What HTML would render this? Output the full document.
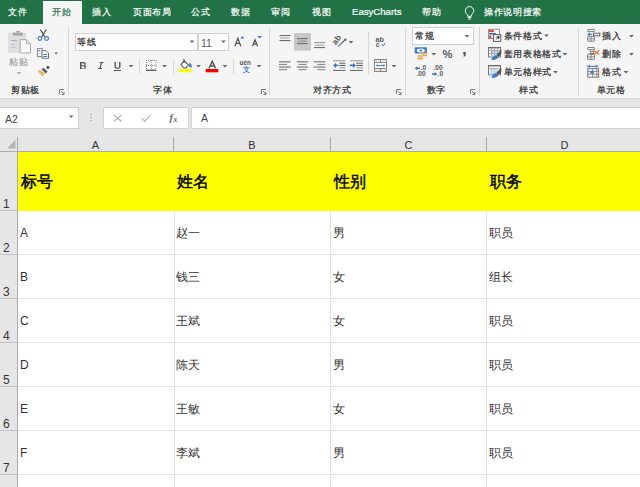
<!DOCTYPE html>
<html><head><meta charset="utf-8">
<style>
*{margin:0;padding:0;box-sizing:border-box}
html,body{width:640px;height:487px;overflow:hidden;background:#fff;font-family:"Liberation Sans",sans-serif}
div{position:absolute;white-space:nowrap}
.tab{top:6px;font-size:9px;letter-spacing:.7px;line-height:12px;color:#fff;-webkit-text-stroke:.2px}
.t{font-size:9px;letter-spacing:.7px;line-height:12px;color:#333;-webkit-text-stroke:.25px}
.ch{top:139px;font-size:11px;line-height:12px;color:#333;text-align:center}
.rn{left:3px;font-size:12px;line-height:12px;color:#333}
.ct{font-size:12px;line-height:14px;color:#333}
.hd{font-size:15.5px;line-height:18px;color:#000;-webkit-text-stroke:.45px #000;top:173px}
.gl{width:1px;background:#e1e1e1}
.gh{height:1px;background:#e1e1e1;left:18px;width:622px}
</style></head><body>
<!-- tab bar -->
<div style="left:0;top:0;width:640px;height:24px;background:#217346"></div>
<div style="left:43px;top:1px;width:39px;height:23px;background:#f5f5f5"></div>
<div class="tab" style="left:8px">文件</div>
<div class="tab" style="left:52px;color:#217346">开始</div>
<div class="tab" style="left:92px">插入</div>
<div class="tab" style="left:133px">页面布局</div>
<div class="tab" style="left:191px">公式</div>
<div class="tab" style="left:231px">数据</div>
<div class="tab" style="left:271px">审阅</div>
<div class="tab" style="left:312px">视图</div>
<div class="tab" style="left:352px;top:5px;font-size:9.6px;letter-spacing:0;line-height:14px">EasyCharts</div>
<div class="tab" style="left:422px">帮助</div>
<div class="tab" style="left:484px">操作说明搜索</div>

<!-- ribbon -->
<div style="left:0;top:24px;width:640px;height:74px;background:#f5f5f5"></div>
<div style="left:0;top:98px;width:640px;height:1px;background:#d4d4d4"></div>

<!-- ribbon separators & icons -->
<svg style="position:absolute;left:0;top:0" width="640" height="100" viewBox="0 0 640 100">
<g fill="#d6d6d6">
<rect x="68" y="27" width="1" height="68"/>
<rect x="269" y="27" width="1" height="68"/>
<rect x="405" y="27" width="1" height="68"/>
<rect x="479" y="27" width="1" height="68"/>
<rect x="578" y="27" width="1" height="68"/>
<rect x="139" y="59" width="1" height="15"/>
<rect x="173" y="59" width="1" height="15"/>
<rect x="233" y="59" width="1" height="15"/>
<rect x="368" y="32" width="1" height="43"/>
</g>
<!-- launchers -->
<g fill="none" stroke="#777" stroke-width="1">
<path d="M59.5 94V89.5H64"/><path d="M61 91L64 94M64 92V94.5H61.5"/>
<path d="M261.5 94V89.5H266"/><path d="M263 91L266 94M266 92V94.5H263.5"/>
<path d="M396.5 94V89.5H401"/><path d="M398 91L401 94M401 92V94.5H398.5"/>
<path d="M470.5 94V89.5H475"/><path d="M472 91L475 94M475 92V94.5H472.5"/>
</g>
<!-- font boxes -->
<rect x="75.5" y="33.5" width="122" height="17" fill="#fff" stroke="#d0d0d0"/>
<rect x="198.5" y="33.5" width="30" height="17" fill="#fff" stroke="#d0d0d0"/>
<!-- number format box -->
<rect x="412.5" y="27.5" width="61" height="17" fill="#fff" stroke="#d0d0d0"/>
<!-- dropdown arrows -->
<g fill="#666">
<path d="M16.6 72.0h4.8l-2.4 2.5z" fill="#a8a8a8"/>
<path d="M54.2 52.6h3.8l-1.9 2z"/>
<path d="M128.6 65.0h4.8l-2.4 2.5z"/>
<path d="M162.1 65.0h4.8l-2.4 2.5z"/>
<path d="M196.1 65.0h4.8l-2.4 2.5z"/>
<path d="M222.6 65.0h4.8l-2.4 2.5z"/>
<path d="M256.6 65.0h4.8l-2.4 2.5z"/>
<path d="M348.6 41.0h4.8l-2.4 2.5z"/>
<path d="M391.6 65.0h4.8l-2.4 2.5z"/>
<path d="M189.6 40.5h4.8l-2.4 2.5z"/>
<path d="M221.1 40.5h4.8l-2.4 2.5z"/>
<path d="M464.6 35.0h4.8l-2.4 2.5z"/>
<path d="M431.4 53.0h4.8l-2.4 2.5z"/>
<path d="M544.1 34.5h4.8l-2.4 2.5z"/>
<path d="M562.6 53.0h4.8l-2.4 2.5z"/>
<path d="M553.1 71.0h4.8l-2.4 2.5z"/>
<path d="M629.1 35.0h4.8l-2.4 2.5z"/>
<path d="M629.1 53.0h4.8l-2.4 2.5z"/>
<path d="M623.6 71.0h4.8l-2.4 2.5z"/>
</g>
<!-- paste (disabled) -->
<g>
<rect x="9" y="33.5" width="16" height="18.5" fill="#e6e6e6" stroke="#cdcdcd"/>
<rect x="10.5" y="36" width="13" height="14.5" fill="#dedede"/>
<rect x="12.8" y="32.5" width="10.2" height="3.2" fill="#a8a8a8"/>
<path d="M16.2 32.5v-1.6h3.6v1.6z" fill="#a8a8a8"/>
<rect x="11" y="40" width="6" height="1" fill="#b9a3cf"/>
<rect x="11" y="44" width="4" height="1" fill="#c8c0d8"/>
<rect x="11" y="47" width="5" height="1" fill="#c8c0d8"/>
<path d="M20.2 39.7h6.3l4 4v9.3h-10.3z" fill="#f9f9f9" stroke="#a9a9a9"/>
<path d="M26.5 39.7v4h4" fill="none" stroke="#a9a9a9"/>
</g>
<!-- scissors -->
<g fill="none">
<path d="M40.3 29.5L44.8 36.6M46.3 29.5L41.8 36.6" stroke="#555" stroke-width="1.3"/>
<circle cx="39.9" cy="38.5" r="1.9" stroke="#3a78c8" stroke-width="1.1"/>
<circle cx="46.6" cy="38.5" r="1.9" stroke="#3a78c8" stroke-width="1.1"/>
</g>
<!-- copy -->
<g>
<rect x="37.6" y="48.6" width="4.6" height="8" fill="#fff" stroke="#808080"/>
<rect x="38.8" y="50" width="1.4" height="1.2" fill="#3a78c8"/>
<rect x="38.8" y="52.4" width="2" height="1" fill="#a8c4ea"/>
<path d="M42 50.6h3.9l2.6 2.6v5.1h-6.5z" fill="#fff" stroke="#707070"/>
<rect x="43.2" y="54" width="4" height="1" fill="#3a78c8"/>
<rect x="43.2" y="56" width="4" height="1" fill="#3a78c8"/>
</g>
<!-- format painter -->
<g>
<path d="M37.5 71.1L40.3 70L45.1 73.5L42.3 76.6z" fill="#e8b866"/>
<path d="M41.6 69.6L43.4 67.8L47.6 71.6L45.8 73.4z" fill="#5a5a5a"/>
<circle cx="47.9" cy="67.4" r="1.6" fill="#5a5a5a"/>
</g>

<!-- grow/shrink font -->
<path d="M234.9 46.2L237.85 38.3L240.8 46.2M236 43.4h3.8M252.5 46.2L255 39.8L257.5 46.2M253.4 44.2h3.2" fill="none" stroke="#555" stroke-width="1.25"/>
<path d="M240.2 38.4L242.25 35.9L244.3 38.4z M257.4 35.9h4.6l-2.3 2.5z" fill="#3a78c8"/>

<!-- B I U -->
<g fill="#555">
<path d="M80 62h3.3c1.6 0 2.5 .8 2.5 1.8c0 .8-.5 1.3-1.1 1.5c.8 .2 1.4 .9 1.4 1.8c0 1.2-1 1.9-2.6 1.9H80zM81.5 63.2v2h1.6c.8 0 1.2-.4 1.2-1s-.4-1-1.2-1zM81.5 66.3v2.3h1.8c.9 0 1.3-.4 1.3-1.15s-.5-1.15-1.3-1.15z"/>
<path d="M99.5 62h4v1h-1.4l-1.4 5h1.3v1h-4v-1h1.4l1.4-5h-1.3z"/>
<path d="M114.5 62h1.4v4.2c0 1.1 .6 1.6 1.6 1.6s1.6-.5 1.6-1.6V62h1.4v4.2c0 1.8-1.1 2.8-3 2.8s-3-1-3-2.8z"/>
<rect x="114" y="70" width="7" height="1"/>
</g>
<!-- borders icon -->
<rect x="146" y="60" width="10.4" height="10" fill="#fff"/>
<path d="M146.5 60v10M151.5 60v10M155.9 60v10M146 60.5h10.4M146 65.5h10.4" stroke="#8c8c8c" stroke-width="1" stroke-dasharray="1 1" fill="none"/>
<rect x="146" y="69.6" width="10.4" height="1.3" fill="#555"/>
<!-- fill color -->
<path d="M180.9 64.3L184.3 60.9L188.5 65.1L185.6 68Q183.2 68.4 180.9 64.3z" fill="#fff" stroke="#5a5a5a" stroke-width="1.1"/>
<path d="M183.9 59v4" stroke="#5a5a5a" stroke-width="1.1"/>
<path d="M189.2 62.8c1.9 .8 3 2.6 2.6 4.6l-2.6-.3z" fill="#3a78c8"/>
<rect x="179" y="69" width="12.8" height="3.3" fill="#ffff00"/>
<!-- font color -->
<path d="M209.1 68.3L212.3 61.3L215.5 68.3M210.4 66h3.8" fill="none" stroke="#555" stroke-width="1.45"/>
<rect x="205.7" y="69" width="12.6" height="3.3" fill="#ff0000"/>
<!-- phonetic -->
<text x="239.6" y="65.2" font-family="Liberation Sans" font-weight="bold" font-size="6.4" fill="#555">uén</text>
<text x="242.6" y="72.4" font-size="7" font-weight="bold" fill="#3a78c8">文</text>
<!-- alignment -->
<rect x="294" y="33" width="17" height="17.7" fill="#c8c8c8"/>
<g fill="#6e6e6e">
<rect x="279.5" y="35" width="11" height="1.1"/><rect x="280.3" y="37.5" width="9.4" height="1.1" fill="#a0a0a0"/><rect x="279.5" y="40" width="11" height="1.1"/>
<rect x="297" y="38" width="10.6" height="1.1"/><rect x="298" y="40.6" width="9" height="1.1" fill="#8e8e8e"/><rect x="297" y="43" width="10.6" height="1.1"/>
<rect x="314" y="42" width="11" height="1.1" fill="#9a9a9a"/><rect x="314.8" y="44.6" width="9.4" height="1.1" fill="#a0a0a0"/><rect x="314" y="47" width="11" height="1.1"/>
<rect x="279" y="61.3" width="11.7" height="1.1"/><rect x="279" y="63.9" width="8" height="1.1" fill="#8a8a8a"/><rect x="279" y="66.5" width="11.7" height="1.1"/><rect x="279" y="69.1" width="8" height="1.1" fill="#8a8a8a"/>
<rect x="296.8" y="61.3" width="11.3" height="1.1"/><rect x="298.5" y="63.9" width="8" height="1.1" fill="#8a8a8a"/><rect x="296.8" y="66.5" width="11.3" height="1.1"/><rect x="298.5" y="69.1" width="8" height="1.1" fill="#8a8a8a"/>
<rect x="313.6" y="61.3" width="11.6" height="1.1"/><rect x="317.2" y="63.9" width="8" height="1.1" fill="#8a8a8a"/><rect x="313.6" y="66.5" width="11.6" height="1.1"/><rect x="317.2" y="69.1" width="8" height="1.1" fill="#8a8a8a"/>
<rect x="333" y="60.2" width="12.5" height="1.1" fill="#9a9a9a"/><rect x="339.3" y="62.7" width="6.2" height="1.1"/><rect x="339.3" y="64.9" width="6.2" height="1.1" fill="#5a5a5a"/><rect x="339.3" y="67.2" width="6.2" height="1.1" fill="#a0a0a0"/><rect x="333" y="69.9" width="12.5" height="1.1"/>
<rect x="350" y="60.2" width="12.9" height="1.1" fill="#9a9a9a"/><rect x="356.4" y="62.7" width="6.5" height="1.1"/><rect x="356.4" y="64.9" width="6.5" height="1.1" fill="#5a5a5a"/><rect x="356.4" y="67.2" width="6.5" height="1.1" fill="#a0a0a0"/><rect x="350" y="69.9" width="12.9" height="1.1"/>
</g>
<path d="M333 65.4L336 62.8V64.6H338.3V66.2H336V68z" fill="#3a78c8"/>
<path d="M356 65.4L353 62.8V64.6H350V66.2H353V68z" fill="#3a78c8"/>
<!-- orientation -->
<text x="0" y="0" font-family="Liberation Sans" font-weight="bold" font-size="8.4" fill="#5a5a5a" transform="translate(336 45.4) rotate(-55)">ab</text>
<path d="M338.2 46.4L345.8 39.2" fill="none" stroke="#5a5a5a" stroke-width="1.1"/>
<path d="M346.5 38.5l-.6 2.8l-2.2-2.2z" fill="#5a5a5a"/>
<!-- wrap text -->
<text x="375.6" y="41.8" font-family="Liberation Sans" font-weight="bold" font-size="7.2" fill="#5a5a5a">ab</text>
<text x="375.8" y="47" font-family="Liberation Sans" font-weight="bold" font-size="7.2" fill="#5a5a5a">c</text>
<path d="M384.6 43v1.2c0 .7-.4 1-1 1h-1.3M382.9 44.3l-.9 .9l.9 .9" fill="none" stroke="#3a78c8" stroke-width=".9"/>
<!-- merge -->
<rect x="374.5" y="59.5" width="12" height="12" fill="#e8e8e8" stroke="#888"/>
<rect x="374.5" y="62.5" width="12" height="6" fill="#fff" stroke="#888"/>
<path d="M380.5 59.5v3M380.5 68.5v3" stroke="#888"/>
<path d="M376.3 65.5h8.4" fill="none" stroke="#3a78c8" stroke-width=".9"/>
<path d="M376 65.5l1.6-1.4v2.8zM385 65.5l-1.6-1.4v2.8z" fill="#3a78c8"/>
<!-- accounting -->
<rect x="414.7" y="47.3" width="12.2" height="6.2" fill="#3a78c8"/>
<ellipse cx="420.8" cy="50.4" rx="4" ry="2" fill="#fff"/>
<circle cx="420.8" cy="50.4" r="1.2" fill="#3a78c8"/>
<g fill="#e8a84a">
<rect x="421.6" y="52.4" width="5.6" height="1.6" rx=".7"/><rect x="421.6" y="54.6" width="5.6" height="1.6" rx=".7"/>
<rect x="417.4" y="55.2" width="5.6" height="1.6" rx=".7"/><rect x="417.4" y="57.6" width="5.6" height="1.8" rx=".7"/>
</g>
<text x="442.6" y="58.2" font-family="Liberation Sans" font-weight="bold" font-size="11.2" fill="#5a5a5a">%</text>
<path d="M463.2 52h2.6v2.2c0 1.3-.7 2.2-1.9 2.6l-.5-.8c.6-.3 .9-.8 1-1.4h-1.2z" fill="#5a5a5a"/>
<!-- increase / decrease decimal -->
<g font-family="Liberation Sans" font-size="6.6" font-weight="bold" fill="#5a5a5a">
<text x="420.6" y="70.4">.0</text><text x="416.4" y="76.1">.00</text>
<text x="433.4" y="70.4">.00</text><text x="437.6" y="76.1">.0</text>
</g>
<path d="M414.7 68.3L417.3 66.2V67.6H420V69H417.3V70.4z" fill="#3a78c8"/>
<path d="M437.2 74L434.6 71.9V73.3H432V74.7H434.6V76.1z" fill="#3a78c8"/>
<!-- conditional formatting -->
<rect x="488.5" y="29.3" width="11" height="9.3" fill="#fafafa" stroke="#8a8a8a" stroke-width=".9"/>
<rect x="489" y="30" width="5" height="2.1" fill="#e2502f"/>
<rect x="489" y="33" width="7" height="1.6" fill="#3a78c8"/>
<rect x="489" y="35.6" width="2.4" height="2.6" fill="#e2502f"/>
<rect x="493.5" y="34.6" width="7.2" height="6.8" fill="#fff" stroke="#666" stroke-width="1.1"/>
<path d="M495.8 39.6L499 36.6M496.6 36.8L499.2 36.4L498.8 39z" fill="#444" stroke="#444" stroke-width=".8"/>
<!-- table style -->
<g>
<rect x="488.5" y="47.5" width="12" height="9.5" fill="#fff" stroke="#7a7a7a"/>
<rect x="488" y="47" width="13" height="1.4" fill="#6a6a6a"/>
<path d="M488.5 50.6h12M488.5 53.6h12M491.5 47.5v9.5M494.6 47.5v9.5M497.6 47.5v9.5" stroke="#9a9a9a" stroke-width=".9"/>
<rect x="492" y="51.1" width="2.2" height="2.1" fill="#b8d0ec"/><rect x="495.1" y="51.1" width="2.2" height="2.1" fill="#b8d0ec"/>
<rect x="492" y="54.1" width="2.2" height="2.4" fill="#cfdff2"/>
<path d="M501.3 49.5L501.3 53.5Q500.6 55.6 498.1 56.9L496.2 55.1z" fill="#555"/>
<path d="M491.3 59.9Q492.4 56.2 496 55.1L498.3 57.1Q497.2 60.2 491.3 59.9z" fill="#3a78c8"/>
</g>
<!-- cell style -->
<g>
<rect x="488.5" y="65.5" width="12" height="9.3" fill="#fff" stroke="#7a7a7a"/>
<rect x="488" y="65" width="13" height="1.4" fill="#6a6a6a"/>
<path d="M488.5 68.3h12" stroke="#9a9a9a" stroke-width=".9"/>
<rect x="489.6" y="68.9" width="8.5" height="5.4" fill="#c6daf0"/>
<path d="M501.3 67.4L501.3 71.4Q500.6 73.5 498.1 74.8L496.2 73z" fill="#555"/>
<path d="M491.3 77.8Q492.4 74.1 496 73L498.3 75Q497.2 78.1 491.3 77.8z" fill="#3a78c8"/>
</g>
<!-- insert cells -->
<g fill="none" stroke="#7a7a7a" stroke-width="1">
<rect x="587.6" y="29.4" width="6.8" height="2.2" rx=".6"/>
<rect x="587.6" y="36.6" width="6.8" height="4.6" rx=".6"/>
<path d="M587.6 38.9h6.8M591 36.6v4.6" stroke-width=".8"/>
<rect x="593.4" y="33.2" width="6.4" height="2.6" stroke="#555"/>
<rect x="587.6" y="47.5" width="6.8" height="2.2" rx=".6"/>
<rect x="590.3" y="51.3" width="3.2" height="2.2"/>
<rect x="587.6" y="54.4" width="6.8" height="5" rx=".6"/>
<path d="M587.6 56.9h6.8M591 54.4v5" stroke-width=".8"/>
<rect x="587.8" y="68.6" width="10.8" height="8.6"/>
<path d="M587.8 71.4h10.8M587.8 74.2h10.8M592.6 68.6v8.6M596.8 68.6v8.6" stroke-width=".8"/>
</g>
<rect x="594" y="33.8" width="5.2" height="1.4" fill="#cfe0f3"/>
<path d="M587.1 34.4L589.6 32.2V33.7H592V35.1H589.6V36.6z" fill="#3a78c8"/>
<path d="M593.8 50.4l5.6 4.4M599.4 50.4l-5.6 4.4" stroke="#e87a40" stroke-width="1.3"/>
<rect x="590.3" y="71" width="3.5" height="2.6" fill="#3a78c8"/>
<path d="M588.5 66.3h8.2" stroke="#3a78c8" stroke-width="1"/>
<path d="M587.9 66.3l1.6-1.1v2.2zM597.3 66.3l-1.6-1.1v2.2zM587.3 65.2v2.3M597.8 65.2v2.3" fill="#3a78c8" stroke="#3a78c8" stroke-width=".6"/>
</svg>
<!-- ribbon texts -->
<div class="t" style="left:9px;top:56px;color:#a8a8a8">粘贴</div>
<div class="t" style="left:11px;top:84px">剪贴板</div>
<div class="t" style="left:77px;top:36px">等线</div>
<div style="left:201px;top:36.5px;font-size:10.5px;line-height:12px;color:#555">11</div>
<div class="t" style="left:153px;top:84px">字体</div>
<div class="t" style="left:313px;top:84px">对齐方式</div>
<div class="t" style="left:415px;top:30px">常规</div>
<div class="t" style="left:426.5px;top:84px">数字</div>
<div class="t" style="left:503.5px;top:30px">条件格式</div>
<div class="t" style="left:503.5px;top:48px">套用表格格式</div>
<div class="t" style="left:503.5px;top:66px">单元格样式</div>
<div class="t" style="left:519px;top:84px">样式</div>
<div class="t" style="left:602px;top:30px">插入</div>
<div class="t" style="left:602px;top:48px">删除</div>
<div class="t" style="left:602px;top:66px">格式</div>
<div class="t" style="left:596.5px;top:84px">单元格</div>
<!-- lightbulb -->
<svg style="position:absolute;left:460px;top:4px" width="20" height="18" viewBox="0 0 20 18">
<path d="M9.5 2.6c-2.4 0-4.2 1.8-4.2 4.1c0 1.6.9 2.6 1.6 3.5c.5.6.8 1.2.8 2.1h3.6c0-.9.3-1.5.8-2.1c.7-.9 1.6-1.9 1.6-3.5c0-2.3-1.8-4.1-4.2-4.1z" fill="none" stroke="#fff" stroke-width="1"/>
<path d="M7.7 13.5h3.6M8.2 15h2.6" stroke="#fff" stroke-width="1"/>
</svg>

<!-- formula bar -->
<div style="left:0;top:99px;width:640px;height:37px;background:#e6e6e6"></div>
<div style="left:-1px;top:107px;width:80px;height:22px;background:#fff;border:1px solid #d2d2d2"></div>
<div style="left:103px;top:107px;width:86px;height:22px;background:#fff;border:1px solid #d2d2d2"></div>
<div style="left:191px;top:107px;width:460px;height:22px;background:#fff;border:1px solid #d2d2d2"></div>
<div style="left:5px;top:113px;font-size:10.5px;line-height:12px;color:#444">A2</div>
<div style="left:201px;top:112px;font-size:10.5px;line-height:12px;color:#444">A</div>

<!-- fbar icons placeholder -->
<!-- column headers -->
<div style="left:0;top:136px;width:640px;height:16px;background:#e6e6e6"></div>
<div class="ch" style="left:18px;width:155px">A</div>
<div class="ch" style="left:174px;width:156px">B</div>
<div class="ch" style="left:331px;width:155px">C</div>
<div class="ch" style="left:487px;width:155px">D</div>

<!-- row header -->
<div style="left:0;top:152px;width:17px;height:335px;background:#e6e6e6"></div>

<!-- grid -->
<div style="left:18px;top:152px;width:622px;height:59px;background:#ffff00"></div>
<div class="gh" style="top:254px"></div>
<div class="gh" style="top:298px"></div>
<div class="gh" style="top:342px"></div>
<div class="gh" style="top:386px"></div>
<div class="gh" style="top:430px"></div>
<div class="gh" style="top:474px"></div>
<div class="gl" style="left:174px;top:211px;height:276px"></div>
<div class="gl" style="left:330px;top:211px;height:276px"></div>
<div class="gl" style="left:486px;top:211px;height:276px"></div>
<!-- header borders -->
<div style="left:0;top:151px;width:640px;height:1px;background:#ababab"></div>
<div style="left:17px;top:137px;width:1px;height:350px;background:#ababab"></div>
<div style="left:173px;top:137px;width:1px;height:14px;background:#ababab"></div>
<div style="left:330px;top:137px;width:1px;height:14px;background:#ababab"></div>
<div style="left:486px;top:137px;width:1px;height:14px;background:#ababab"></div>
<div style="left:0;top:210px;width:17px;height:1px;background:#c4c4c4"></div>
<div style="left:0;top:254px;width:17px;height:1px;background:#c4c4c4"></div>
<div style="left:0;top:298px;width:17px;height:1px;background:#c4c4c4"></div>
<div style="left:0;top:342px;width:17px;height:1px;background:#c4c4c4"></div>
<div style="left:0;top:386px;width:17px;height:1px;background:#c4c4c4"></div>
<div style="left:0;top:430px;width:17px;height:1px;background:#c4c4c4"></div>
<div style="left:0;top:474px;width:17px;height:1px;background:#c4c4c4"></div>

<svg style="position:absolute;left:0;top:99px" width="640" height="53" viewBox="0 99 640 53">
<path d="M68.8 115.6h4.8l-2.4 2.5z" fill="#6a6a6a"/>
<g fill="#9a9a9a"><rect x="90.5" y="114" width="1.2" height="1.2"/><rect x="90.5" y="117" width="1.2" height="1.2"/><rect x="90.5" y="120" width="1.2" height="1.2"/></g>
<path d="M114 115l7.5 6.5M121.5 115l-7.5 6.5" stroke="#b4b4b4" stroke-width="1.1" fill="none"/>
<path d="M141.8 118.2l3 3.2l6-6.8" stroke="#b4b4b4" stroke-width="1.1" fill="none"/>
<text x="169.6" y="121" font-family="Liberation Serif" font-style="italic" font-weight="bold" font-size="10.5" fill="#666">f</text>
<text x="173.6" y="121.6" font-family="Liberation Serif" font-style="italic" font-weight="bold" font-size="7.5" fill="#666">x</text>
<path d="M15.5 140v8.5h-8.5z" fill="#b4b4b4"/>
</svg>
<!-- row numbers -->
<div class="rn" style="top:198px">1</div>
<div class="rn" style="top:242px">2</div>
<div class="rn" style="top:286px">3</div>
<div class="rn" style="top:330px">4</div>
<div class="rn" style="top:374px">5</div>
<div class="rn" style="top:418px">6</div>
<div class="rn" style="top:462px">7</div>

<!-- header row -->
<div class="hd" style="left:21px">标号</div>
<div class="hd" style="left:177px">姓名</div>
<div class="hd" style="left:334px">性别</div>
<div class="hd" style="left:490px">职务</div>

<!-- data rows -->
<div class="ct" style="left:20px;top:226px">A</div>
<div class="ct" style="left:176px;top:226px">赵一</div>
<div class="ct" style="left:333px;top:226px">男</div>
<div class="ct" style="left:489px;top:226px">职员</div>

<div class="ct" style="left:20px;top:270px">B</div>
<div class="ct" style="left:176px;top:270px">钱三</div>
<div class="ct" style="left:333px;top:270px">女</div>
<div class="ct" style="left:489px;top:270px">组长</div>

<div class="ct" style="left:20px;top:314px">C</div>
<div class="ct" style="left:176px;top:314px">王斌</div>
<div class="ct" style="left:333px;top:314px">女</div>
<div class="ct" style="left:489px;top:314px">职员</div>

<div class="ct" style="left:20px;top:358px">D</div>
<div class="ct" style="left:176px;top:358px">陈天</div>
<div class="ct" style="left:333px;top:358px">男</div>
<div class="ct" style="left:489px;top:358px">职员</div>

<div class="ct" style="left:20px;top:402px">E</div>
<div class="ct" style="left:176px;top:402px">王敏</div>
<div class="ct" style="left:333px;top:402px">女</div>
<div class="ct" style="left:489px;top:402px">职员</div>

<div class="ct" style="left:20px;top:446px">F</div>
<div class="ct" style="left:176px;top:446px">李斌</div>
<div class="ct" style="left:333px;top:446px">男</div>
<div class="ct" style="left:489px;top:446px">职员</div>
</body></html>
